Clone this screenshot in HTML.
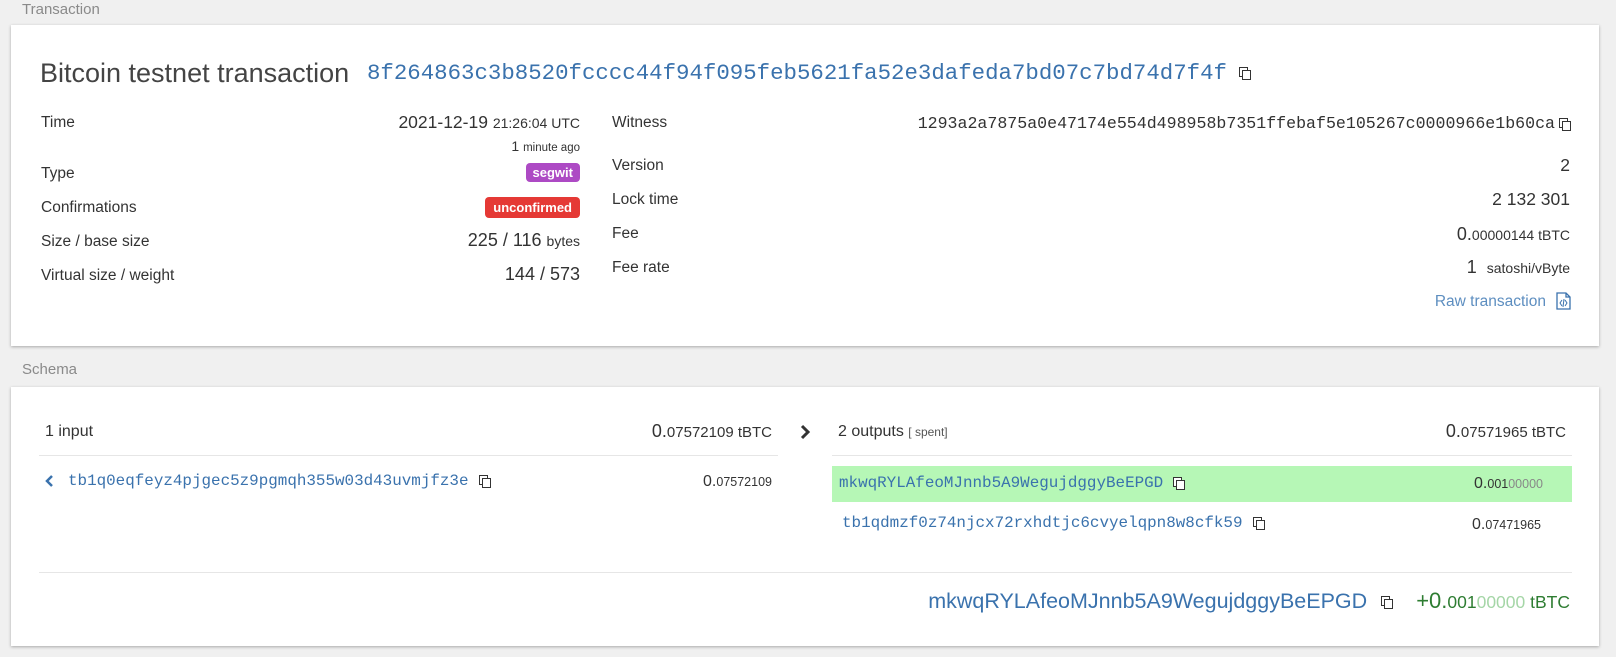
<!DOCTYPE html>
<html><head><meta charset="utf-8"><style>
*{margin:0;padding:0;box-sizing:border-box}
body{width:1616px;height:657px;background:#f0f0f0;font-family:"Liberation Sans",sans-serif;color:#333;position:relative;overflow:hidden}
.a{position:absolute;white-space:nowrap;line-height:1}
.card{position:absolute;left:11px;width:1588px;background:#fff;box-shadow:0 1px 3px rgba(0,0,0,.3)}
.sec{color:#8a8a8a;font-size:15px}
.mono{font-family:"Liberation Mono",monospace}
.blue{color:#3a72ad}
.lbl{font-size:15.5px;left:41px}
.r{text-align:right}
.badge{color:#fff;font-weight:bold;font-size:13px;border-radius:4px;padding:3px 7px}
.line{position:absolute;height:1px;background:#e6e6e6}
.cp{display:inline-block;width:11px;height:12px;position:relative;vertical-align:middle;margin-left:10px}
.cp:before,.cp:after{content:"";position:absolute;width:7px;height:8px;border:1.3px solid #333;background:#fff}
.cp:before{left:0;top:0}.cp:after{left:3px;top:3px}
</style></head><body>
<div class="a sec" style="left:22px;top:2px">Transaction</div>
<div class="card" style="top:25px;height:321px"></div>
<div class="a" style="left:40px;top:60px;font-size:27px;color:#444">Bitcoin testnet transaction</div>
<div class="a mono blue" style="left:367px;top:62px;font-size:22.4px">8f264863c3b8520fcccc44f94f095feb5621fa52e3dafeda7bd07c7bd74d7f4f<span class="cp" style="margin-left:12px"></span></div>

<div class="a lbl" style="top:115px">Time</div>
<div class="a r" style="right:1036px;top:114px;font-size:17.5px">2021-12-19 <span style="font-size:14px">21:26:04 UTC</span></div>
<div class="a r" style="right:1036px;top:139px;font-size:14px">1 <span style="font-size:11.5px">minute ago</span></div>
<div class="a lbl" style="top:166px">Type</div>
<div class="a badge" style="right:1036px;top:163px;background:#ad4ac4">segwit</div>
<div class="a lbl" style="top:200px">Confirmations</div>
<div class="a badge" style="right:1036px;top:197px;background:#e53935;padding:4px 8px">unconfirmed</div>
<div class="a lbl" style="top:234px">Size / base size</div>
<div class="a r" style="right:1036px;top:231px;font-size:18px">225 / 116 <span style="font-size:14px">bytes</span></div>
<div class="a lbl" style="top:268px">Virtual size / weight</div>
<div class="a r" style="right:1036px;top:265px;font-size:18px">144 / 573</div>

<div class="a lbl" style="left:612px;top:115px">Witness</div>
<div class="a mono" style="right:46px;top:116px;font-size:16.6px">1293a2a7875a0e47174e554d498958b7351ffebaf5e105267c0000966e1b60ca<span class="cp" style="margin-left:4px"></span></div>
<div class="a lbl" style="left:612px;top:158px">Version</div>
<div class="a" style="right:46px;top:157px;font-size:17.5px">2</div>
<div class="a lbl" style="left:612px;top:192px">Lock time</div>
<div class="a" style="right:46px;top:191px;font-size:17.5px">2 132 301</div>
<div class="a lbl" style="left:612px;top:226px">Fee</div>
<div class="a" style="right:46px;top:225px;font-size:18px">0.<span style="font-size:14px">00000144 tBTC</span></div>
<div class="a lbl" style="left:612px;top:260px">Fee rate</div>
<div class="a" style="right:46px;top:258px;font-size:18px">1 &nbsp;<span style="font-size:14px">satoshi/vByte</span></div>
<div class="a blue" style="right:70px;top:294px;font-size:15.5px;color:#5d8ec0">Raw transaction</div>
<svg class="a" style="left:1556px;top:292px" width="15" height="18" viewBox="0 0 15 18"><path d="M1 1h9l4 4v12H1z M10 1v4h4" fill="none" stroke="#3a72ad" stroke-width="1.3"/><path d="M6 8l-2 3 2 3M9 8l2 3-2 3M8 7l-1 8" fill="none" stroke="#3a72ad" stroke-width="1"/></svg>

<div class="a sec" style="left:22px;top:362px">Schema</div>
<div class="card" style="top:387px;height:259px"></div>
<div class="a" style="left:45px;top:424px;font-size:16px">1 input</div>
<div class="a" style="right:844px;top:422px;font-size:18px">0.<span style="font-size:15px">07572109 tBTC</span></div>
<div class="line" style="left:39px;width:739px;top:455px"></div>
<svg class="a" style="left:800px;top:424px" width="12" height="16" viewBox="0 0 12 16"><path d="M2 2l6 6-6 6" fill="none" stroke="#333" stroke-width="3"/></svg>
<div class="a" style="left:838px;top:424px;font-size:16px">2 outputs <span style="font-size:12px;color:#555">[ spent]</span></div>
<div class="a" style="right:50px;top:422px;font-size:18px">0.<span style="font-size:15px">07571965 tBTC</span></div>
<div class="line" style="left:832px;width:740px;top:455px"></div>

<svg class="a" style="left:45px;top:474px" width="10" height="14" viewBox="0 0 10 14"><path d="M7 2L2 7l5 5" fill="none" stroke="#3a72ad" stroke-width="2.5"/></svg>
<div class="a mono blue" style="left:68px;top:474px;font-size:15.9px">tb1q0eqfeyz4pjgec5z9pgmqh355w03d43uvmjfz3e<span class="cp"></span></div>
<div class="a" style="right:844px;top:474px;font-size:16px">0.<span style="font-size:12.5px">07572109</span></div>

<div class="a" style="left:832px;top:466px;width:740px;height:36px;background:#b6f7b6"></div>
<div class="a mono blue" style="left:839px;top:476px;font-size:15.9px">mkwqRYLAfeoMJnnb5A9WegujdggyBeEPGD<span class="cp"></span></div>
<div class="a" style="right:73px;top:476px;font-size:16px">0.<span style="font-size:12.5px">001<span style="color:#888">00000</span></span></div>
<div class="a mono blue" style="left:842px;top:516px;font-size:15.9px">tb1qdmzf0z74njcx72rxhdtjc6cvyelqpn8w8cfk59<span class="cp"></span></div>
<div class="a" style="right:75px;top:517px;font-size:16px">0.<span style="font-size:12.5px">07471965</span></div>

<div class="line" style="left:39px;width:1533px;top:572px"></div>
<div class="a r" style="right:46px;top:590px;font-size:21.5px"><span class="blue">mkwqRYLAfeoMJnnb5A9WegujdggyBeEPGD</span><span class="cp" style="margin-left:14px;margin-right:24px"></span><span style="color:#2e7d32;font-size:22px">+0.<span style="font-size:17.5px">001<span style="color:#a5d6a7">00000</span> tBTC</span></span></div>
</body></html>
